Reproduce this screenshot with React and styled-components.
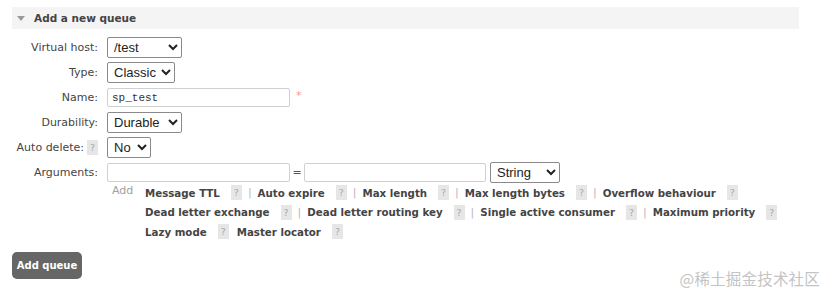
import React from "react";
import styled, { createGlobalStyle } from "styled-components";

const GlobalStyle = createGlobalStyle`
  body {
    margin: 0;
    background: #fff;
    font-family: "DejaVu Sans", Verdana, sans-serif;
    font-size: 11px;
    color: #444;
  }
`;

const Page = styled.div`
  position: relative;
  width: 826px;
  height: 295px;
  padding: 7px 27px 0 12px;
  box-sizing: border-box;
`;

const SectionHeader = styled.div`
  display: flex;
  align-items: center;
  height: 22px;
  background: #f4f4f4;
  padding-left: 5px;
  gap: 9px;
  font-weight: bold;
  font-size: 10.5px;
  color: #444;
`;

const Triangle = styled.span`
  width: 0;
  height: 0;
  border-left: 4px solid transparent;
  border-right: 4px solid transparent;
  border-top: 5px solid #9a9a9a;
`;

const Form = styled.div`
  display: flex;
  flex-direction: column;
  padding-top: 6px;
`;

const Row = styled.div`
  display: flex;
  align-items: center;
  height: 25px;
`;

const Label = styled.div`
  width: 86px;
  margin-right: 9px;
  display: flex;
  justify-content: flex-end;
  align-items: center;
  gap: 3px;
  white-space: nowrap;
`;

const Help = styled.span`
  display: inline-flex;
  align-items: center;
  justify-content: center;
  width: 11px;
  height: 15px;
  background: #e6e6e6;
  color: #a8a8a8;
  font-size: 9.5px;
  font-weight: normal;
`;

const Select = styled.select`
  width: ${(p) => p.$w}px;
  height: 21px;
  box-sizing: border-box;
  font-family: "Liberation Sans", Arial, sans-serif;
  font-size: 13px;
  color: #222;
  border: 1px solid #8a8a8a;
  border-radius: 2px;
  background: #fff;
  padding: 0 2px;
`;

const Input = styled.input`
  width: ${(p) => p.$w}px;
  height: 19px;
  box-sizing: border-box;
  border: 1px solid #d0d0d0;
  border-radius: 2px;
  font-family: "Liberation Mono", "Courier New", monospace;
  font-size: 11px;
  color: #333;
  padding: 0 4px;
  outline: none;
`;

const Required = styled.span`
  color: #f29a9a;
  font-size: 11px;
  margin-left: 6px;
  align-self: flex-start;
  margin-top: 4px;
`;

const Equals = styled.span`
  width: 14px;
  text-align: center;
  color: #555;
`;

const Gap = styled.span`
  width: ${(p) => p.$w}px;
`;

const ArgsRow = styled.div`
  display: flex;
  margin-left: 100px;
  margin-top: -2px;
`;

const AddLabel = styled.span`
  width: 33px;
  color: #a0a0a0;
  line-height: 16px;
`;

const Shortcuts = styled.div`
  display: flex;
  flex-direction: column;
`;

const ShortcutLine = styled.div`
  display: flex;
  align-items: center;
  height: 19.5px;
`;

const Shortcut = styled.span`
  display: inline-flex;
  align-items: center;
  font-weight: bold;
  font-size: 10.25px;
  color: #444;
  white-space: nowrap;
`;

const ShortcutHelp = styled(Help)`
  margin-left: 11px;
`;

const Sep = styled.span`
  color: #b8b8b8;
  margin: 0 6px 0 6px;
  font-weight: normal;
  font-size: 11px;
`;

const Button = styled.button`
  margin-top: 10px;
  width: 70px;
  height: 27px;
  background: #666;
  color: #fff;
  border: none;
  border-radius: 5px;
  font-family: "DejaVu Sans", Verdana, sans-serif;
  font-size: 10px;
  font-weight: bold;
  padding: 0;
`;

const Watermark = styled.div`
  position: absolute;
  right: 6px;
  bottom: 6px;
  font-family: "Noto Sans CJK SC", sans-serif;
  font-size: 15.5px;
  color: #c4c4c4;
  letter-spacing: 0.2px;
`;

const shortcutLines = [
  [
    ["Message TTL", true],
    ["Auto expire", true],
    ["Max length", true],
    ["Max length bytes", true],
    ["Overflow behaviour", false],
  ],
  [
    ["Dead letter exchange", true],
    ["Dead letter routing key", true],
    ["Single active consumer", true],
    ["Maximum priority", false],
  ],
  [
    ["Lazy mode", false],
    ["Master locator", false],
  ],
];

export default function App() {
  return (
    <Page>
      <GlobalStyle />
      <SectionHeader>
        <Triangle />
        Add a new queue
      </SectionHeader>
      <Form>
        <Row>
          <Label>Virtual host:</Label>
          <Select $w={75} defaultValue="/test">
            <option>/test</option>
          </Select>
        </Row>
        <Row>
          <Label>Type:</Label>
          <Select $w={68} defaultValue="Classic">
            <option>Classic</option>
          </Select>
        </Row>
        <Row>
          <Label>Name:</Label>
          <Input $w={183} defaultValue="sp_test" />
          <Required>*</Required>
        </Row>
        <Row>
          <Label>Durability:</Label>
          <Select $w={75} defaultValue="Durable">
            <option>Durable</option>
          </Select>
        </Row>
        <Row>
          <Label>
            Auto delete: <Help>?</Help>
          </Label>
          <Select $w={44} defaultValue="No">
            <option>No</option>
          </Select>
        </Row>
        <Row>
          <Label>Arguments:</Label>
          <Input $w={183} />
          <Equals>=</Equals>
          <Input $w={182} />
          <Gap $w={4} />
          <Select $w={70} defaultValue="String">
            <option>String</option>
          </Select>
        </Row>
        <ArgsRow>
          <AddLabel>Add</AddLabel>
          <Shortcuts>
            {shortcutLines.map((line, i) => (
              <ShortcutLine key={i}>
                {line.map(([name, sep]) => (
                  <Shortcut key={name}>
                    {name}
                    <ShortcutHelp>?</ShortcutHelp>
                    {sep ? <Sep>|</Sep> : <Gap $w={8} />}
                  </Shortcut>
                ))}
              </ShortcutLine>
            ))}
          </Shortcuts>
        </ArgsRow>
      </Form>
      <Button>Add queue</Button>
      <Watermark>@稀土掘金技术社区</Watermark>
    </Page>
  );
}
